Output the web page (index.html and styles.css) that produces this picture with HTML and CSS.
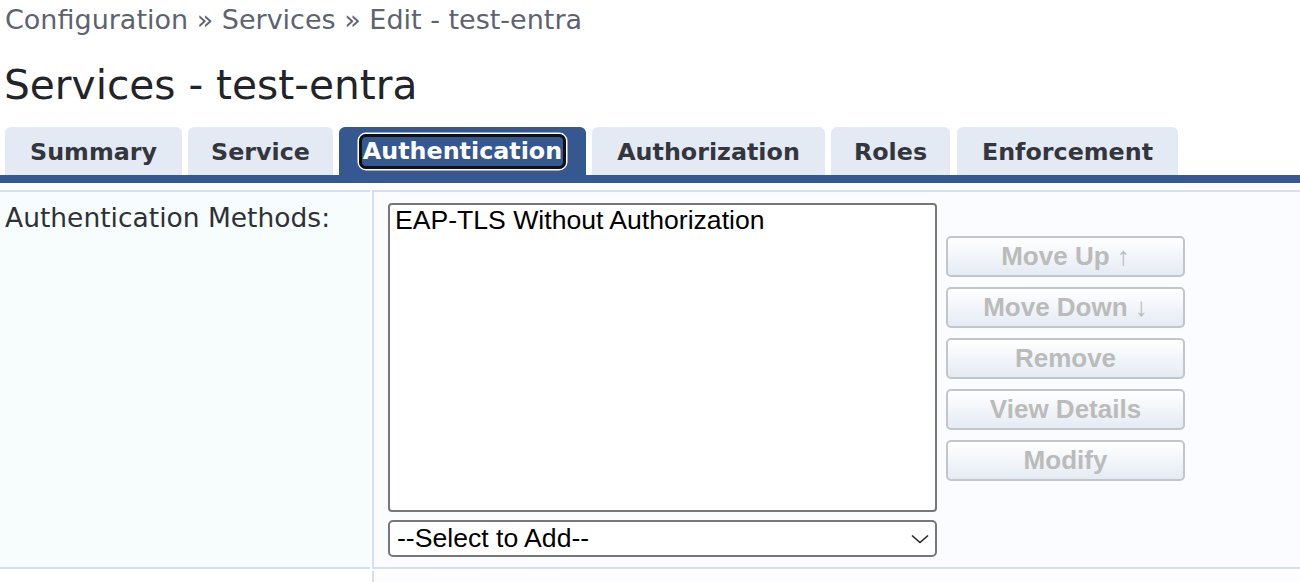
FILE: index.html
```html
<!DOCTYPE html>
<html lang="en">
<head>
<meta charset="utf-8">
<title>Services - test-entra</title>
<link rel="stylesheet" href="styles.css">
</head>
<body>
<div class="breadcrumb">Configuration » Services » Edit - test-entra</div>
<h1 class="title">Services - test-entra</h1>
<div class="tabs">
  <div class="tab tab-summary">Summary</div>
  <div class="tab tab-service">Service</div>
  <div class="tab tab-authn active"><span class="focus">Authentication</span></div>
  <div class="tab tab-authz">Authorization</div>
  <div class="tab tab-roles">Roles</div>
  <div class="tab tab-enf">Enforcement</div>
</div>
<div class="tabbar"></div>
<div class="form">
  <div class="row">
    <div class="cell label">Authentication Methods:</div>
    <div class="cell field">
      <div class="picker">
        <div class="listcol">
          <div class="listbox" role="listbox">
            <div class="option">EAP-TLS Without Authorization</div>
          </div>
          <div class="select">
            <span>--Select to Add--</span>
            <svg class="chevron" width="18" height="10" viewBox="0 0 18 10"><path d="M1 1.5 L9 8.5 L17 1.5" fill="none" stroke="#222" stroke-width="1.6"/></svg>
          </div>
        </div>
        <div class="buttons">
          <button class="btn" disabled>Move Up ↑</button>
          <button class="btn" disabled>Move Down ↓</button>
          <button class="btn" disabled>Remove</button>
          <button class="btn" disabled>View Details</button>
          <button class="btn" disabled>Modify</button>
        </div>
      </div>
    </div>
  </div>
  <div class="row next">
    <div class="cell blank"></div>
    <div class="cell blank field"></div>
  </div>
</div>
</body>
</html>
```

FILE: styles.css
```css
html, body {
  margin: 0;
  padding: 0;
  background: #ffffff;
}
body {
  font-family: "DejaVu Sans", Verdana, sans-serif;
  color: #2b2e33;
  overflow: hidden;
}
.breadcrumb {
  font-size: 27px;
  line-height: 28px;
  color: #5d6370;
  padding: 6px 0 0 5px;
}
.title {
  font-size: 40.7px;
  line-height: 48px;
  font-weight: normal;
  color: #222429;
  margin: 27px 0 0 0;
  padding-left: 4px;
}
.tabs {
  display: flex;
  gap: 6px;
  padding-left: 5px;
  margin-top: 18px;
}
.tab {
  height: 48px;
  box-sizing: border-box;
  padding: 3px 0 0;
  line-height: 45px;
  text-align: center;
  font-size: 23.8px;
  font-weight: bold;
  color: #33363c;
  background: #e4eaf4;
  border-radius: 6px 6px 0 0;
  white-space: nowrap;
}
.tab-summary { width: 177px; }
.tab-service { width: 145px; }
.tab-authn { width: 247px; }
.tab-authz { width: 233px; }
.tab-roles { width: 119px; }
.tab-enf { width: 221px; margin-left: 1px; }
.tab.active {
  background: #355891;
  color: #ffffff;
  padding-top: 6px;
  line-height: 36px;
}
.focus {
  display: inline-block;
  line-height: 29px;
  padding: 0 1px;
  border: 3.5px solid #111111;
  border-radius: 7px;
  box-shadow: 0 0 0 1.5px #ffffff;
}
.tabbar {
  height: 8px;
  background: #355891;
}
.form {
  margin-top: 7px;
}
.row {
  display: grid;
  grid-template-columns: 370px 1fr;
  column-gap: 2px;
}
.cell {
  border-top: 2px solid #d3def7;
  border-bottom: 2px solid #d3def7;
  padding: 11px 0 10px;
}
.label {
  background: #f7fcfd;
  font-size: 26.5px;
  line-height: 30px;
  color: #2e3136;
  padding-left: 5px;
}
.field {
  background: #fbfcff;
  border-left: 2px solid #d3def7;
  padding-left: 14px;
}
.row.next {
  margin-top: 2px;
}
.cell.blank {
  border: none;
  background: #ffffff;
  height: 20px;
  padding: 0;
}
.cell.blank.field {
  border-left: 2px solid #d3def7;
  background: #fdfdff;
}
.picker {
  display: flex;
  gap: 9px;
  align-items: flex-start;
}
.listcol {
  display: flex;
  flex-direction: column;
  gap: 8px;
  width: 549px;
}
.listbox {
  height: 309px;
  box-sizing: border-box;
  border: 2px solid #777777;
  border-radius: 4px;
  background: #ffffff;
  padding: 0 5px;
}
.option {
  font-family: "Liberation Sans", Arial, sans-serif;
  font-size: 26.6px;
  line-height: 30px;
  color: #000000;
}
.select {
  height: 37px;
  box-sizing: border-box;
  border: 2px solid #777777;
  border-radius: 5px;
  background: #ffffff;
  display: flex;
  align-items: center;
  justify-content: space-between;
  padding: 0 6px 0 7px;
  font-family: "Liberation Sans", Arial, sans-serif;
  font-size: 26.6px;
  color: #000000;
}
.chevron {
  display: block;
}
.buttons {
  display: flex;
  flex-direction: column;
  gap: 10px;
  margin-top: 33px;
}
.btn {
  width: 239px;
  height: 41px;
  box-sizing: border-box;
  border: 2px solid #c2c5c9;
  border-radius: 5px;
  background: linear-gradient(#ffffff, #e5ebf4);
  font-family: "Liberation Sans", Arial, sans-serif;
  font-weight: bold;
  font-size: 26px;
  color: #bbbbbb;
  padding: 0;
  line-height: 37px;
}
```
